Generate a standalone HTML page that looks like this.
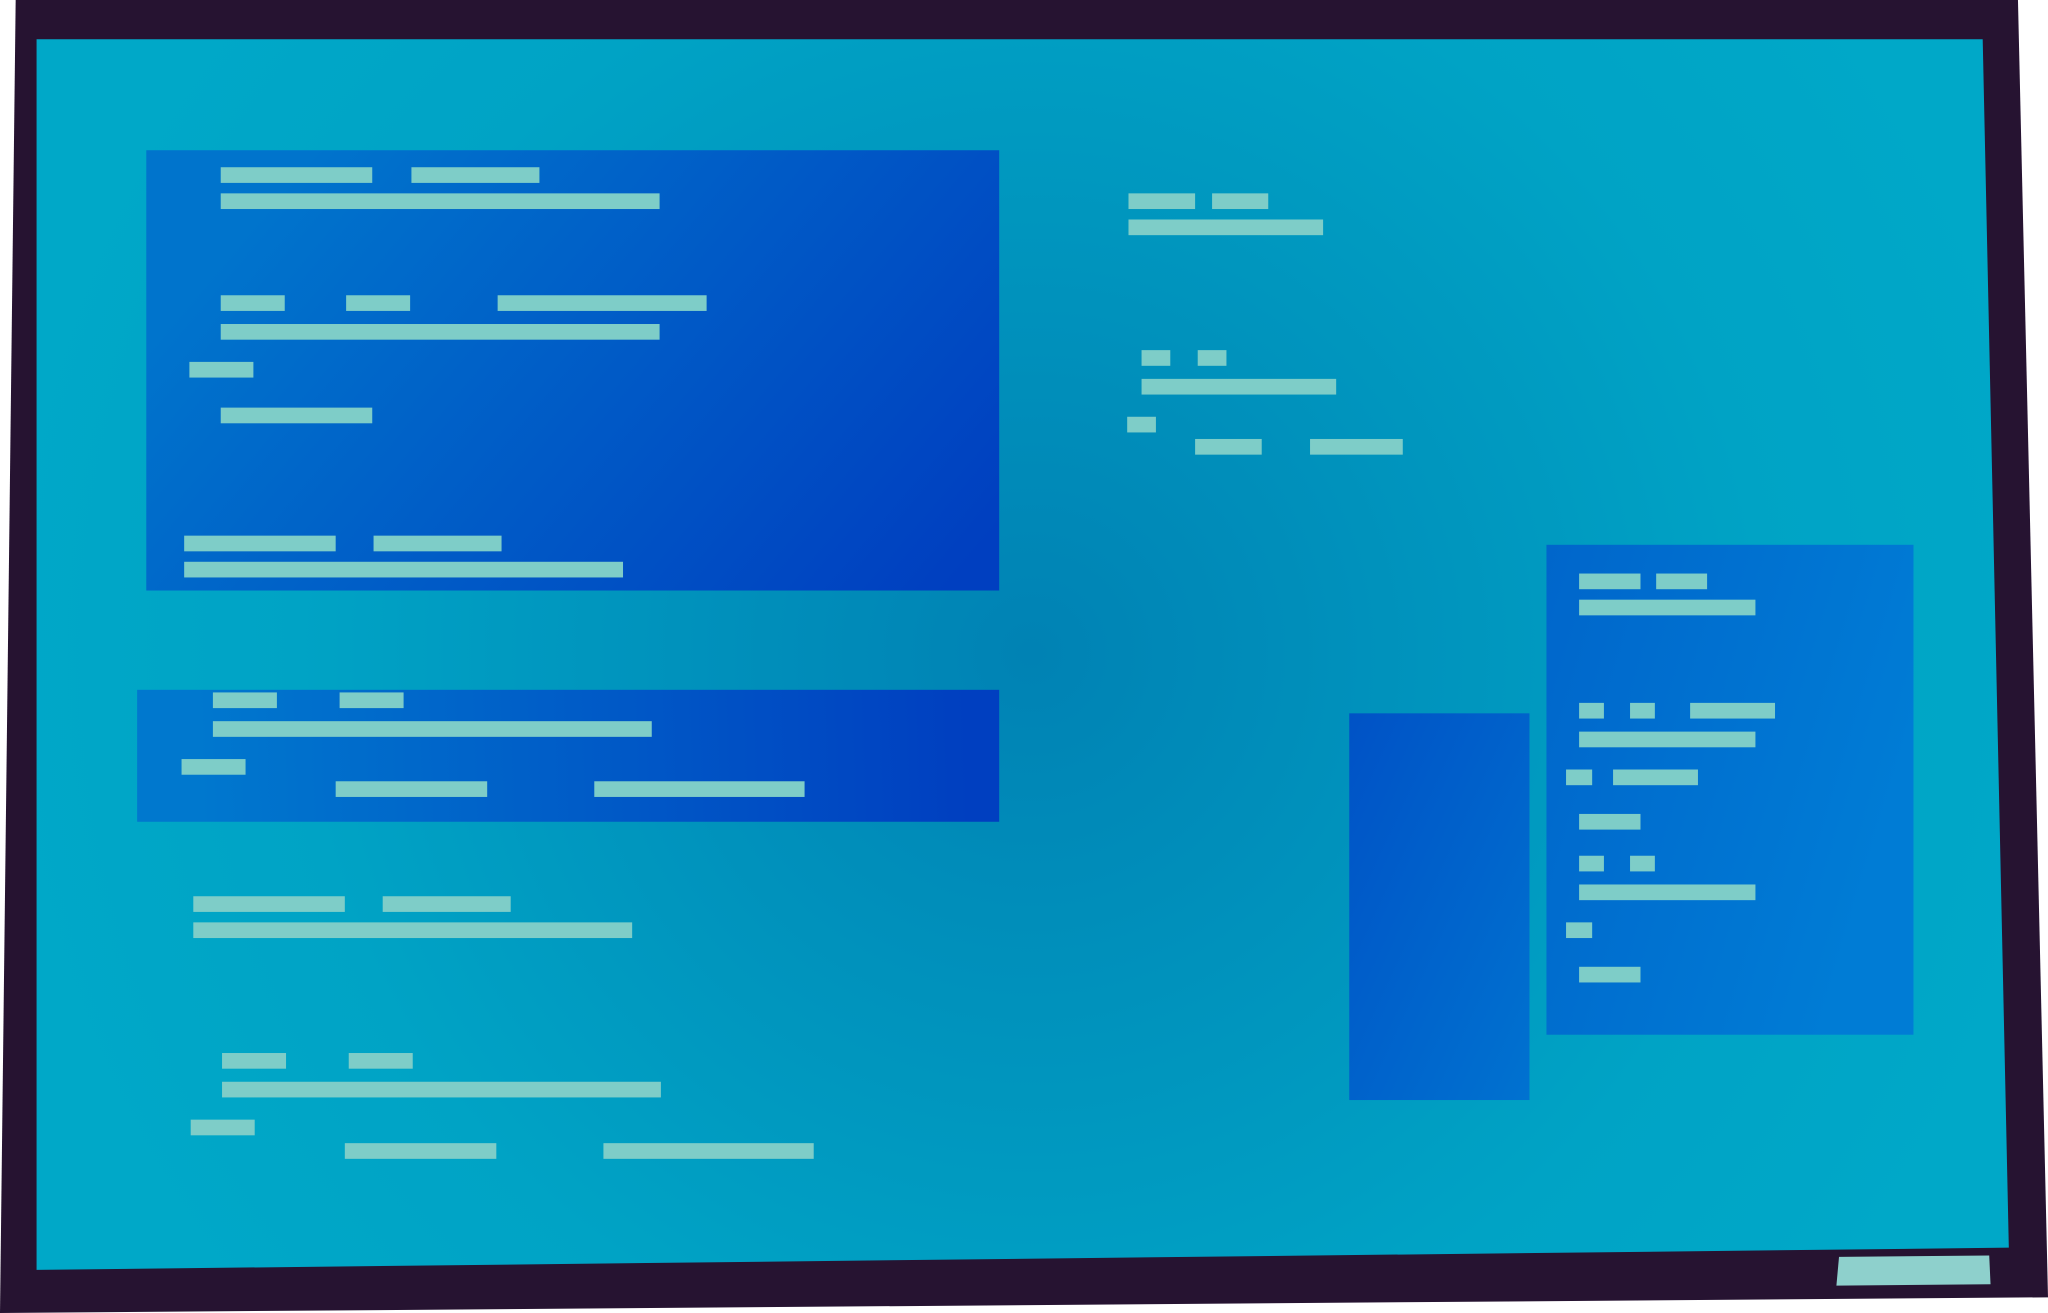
<!DOCTYPE html>
<html><head><meta charset="utf-8"><style>html,body{margin:0;padding:0;background:#fff}svg{display:block}</style></head><body>
<svg width="2048" height="1313" viewBox="0 0 1568 1005" preserveAspectRatio="none" xmlns="http://www.w3.org/2000/svg">
<defs>
<radialGradient id="bg" cx="790" cy="500" r="800" gradientUnits="userSpaceOnUse">
<stop offset="0" stop-color="#0082b4"/><stop offset="0.7" stop-color="#00a3c5"/><stop offset="1" stop-color="#00a8c8"/></radialGradient>
<linearGradient id="p1" gradientUnits="userSpaceOnUse" x1="250" y1="100" x2="700" y2="480"><stop offset="0" stop-color="#0074cc"/><stop offset="1" stop-color="#003fc0"/></linearGradient>
<linearGradient id="p2" gradientUnits="userSpaceOnUse" x1="150" y1="580" x2="740" y2="560"><stop offset="0" stop-color="#0078ce"/><stop offset="1" stop-color="#003fc0"/></linearGradient>
<linearGradient id="p3" x1="0" y1="0" x2="1" y2="1"><stop offset="0" stop-color="#0052c6"/><stop offset="1" stop-color="#0072d0"/></linearGradient>
<linearGradient id="p4" x1="0" y1="0" x2="1" y2="0.4"><stop offset="0" stop-color="#0066cb"/><stop offset="1" stop-color="#007cd5"/></linearGradient>
</defs>
<rect width="1568" height="1005" fill="#fff"/>
<polygon points="12,0 1545,0 1568,993 0,1005" fill="#261331"/>
<polygon points="28,30 1518,30 1538,955 28,972" fill="url(#bg)"/>
<polygon points="1408,962 1523,961 1524,983 1406,984" fill="#8ed0cc"/>
<rect x="112" y="115" width="653" height="337" fill="url(#p1)"/>
<rect x="105" y="528" width="660" height="101" fill="url(#p2)"/>
<rect x="1033" y="546" width="138" height="296" fill="url(#p3)"/>
<rect x="1184" y="417" width="281" height="375" fill="url(#p4)"/>
<g fill="#7ecdc8">
<rect x="169" y="128" width="116" height="12"/><rect x="315" y="128" width="98" height="12"/>
<rect x="169" y="148" width="336" height="12"/>
<rect x="169" y="226" width="49" height="12"/><rect x="265" y="226" width="49" height="12"/><rect x="381" y="226" width="160" height="12"/>
<rect x="169" y="248" width="336" height="12"/>
<rect x="145" y="277" width="49" height="12"/>
<rect x="169" y="312" width="116" height="12"/>
<rect x="141" y="410" width="116" height="12"/><rect x="286" y="410" width="98" height="12"/>
<rect x="141" y="430" width="336" height="12"/>
<rect x="864" y="148" width="51" height="12"/><rect x="928" y="148" width="43" height="12"/>
<rect x="864" y="168" width="149" height="12"/>
<rect x="874" y="268" width="22" height="12"/><rect x="917" y="268" width="22" height="12"/>
<rect x="874" y="290" width="149" height="12"/>
<rect x="863" y="319" width="22" height="12"/>
<rect x="915" y="336" width="51" height="12"/><rect x="1003" y="336" width="71" height="12"/>
<rect x="163" y="530" width="49" height="12"/><rect x="260" y="530" width="49" height="12"/>
<rect x="163" y="552" width="336" height="12"/>
<rect x="139" y="581" width="49" height="12"/>
<rect x="257" y="598" width="116" height="12"/><rect x="455" y="598" width="161" height="12"/>
<rect x="148" y="686" width="116" height="12"/><rect x="293" y="686" width="98" height="12"/>
<rect x="148" y="706" width="336" height="12"/>
<rect x="170" y="806" width="49" height="12"/><rect x="267" y="806" width="49" height="12"/>
<rect x="170" y="828" width="336" height="12"/>
<rect x="146" y="857" width="49" height="12"/>
<rect x="264" y="875" width="116" height="12"/><rect x="462" y="875" width="161" height="12"/>
<rect x="1209" y="439" width="47" height="12"/><rect x="1268" y="439" width="39" height="12"/>
<rect x="1209" y="459" width="135" height="12"/>
<rect x="1209" y="538" width="19" height="12"/><rect x="1248" y="538" width="19" height="12"/><rect x="1294" y="538" width="65" height="12"/>
<rect x="1209" y="560" width="135" height="12"/>
<rect x="1199" y="589" width="20" height="12"/><rect x="1235" y="589" width="65" height="12"/>
<rect x="1209" y="623" width="47" height="12"/>
<rect x="1209" y="655" width="19" height="12"/><rect x="1248" y="655" width="19" height="12"/>
<rect x="1209" y="677" width="135" height="12"/>
<rect x="1199" y="706" width="20" height="12"/>
<rect x="1209" y="740" width="47" height="12"/>
</g>
</svg>
</body></html>
